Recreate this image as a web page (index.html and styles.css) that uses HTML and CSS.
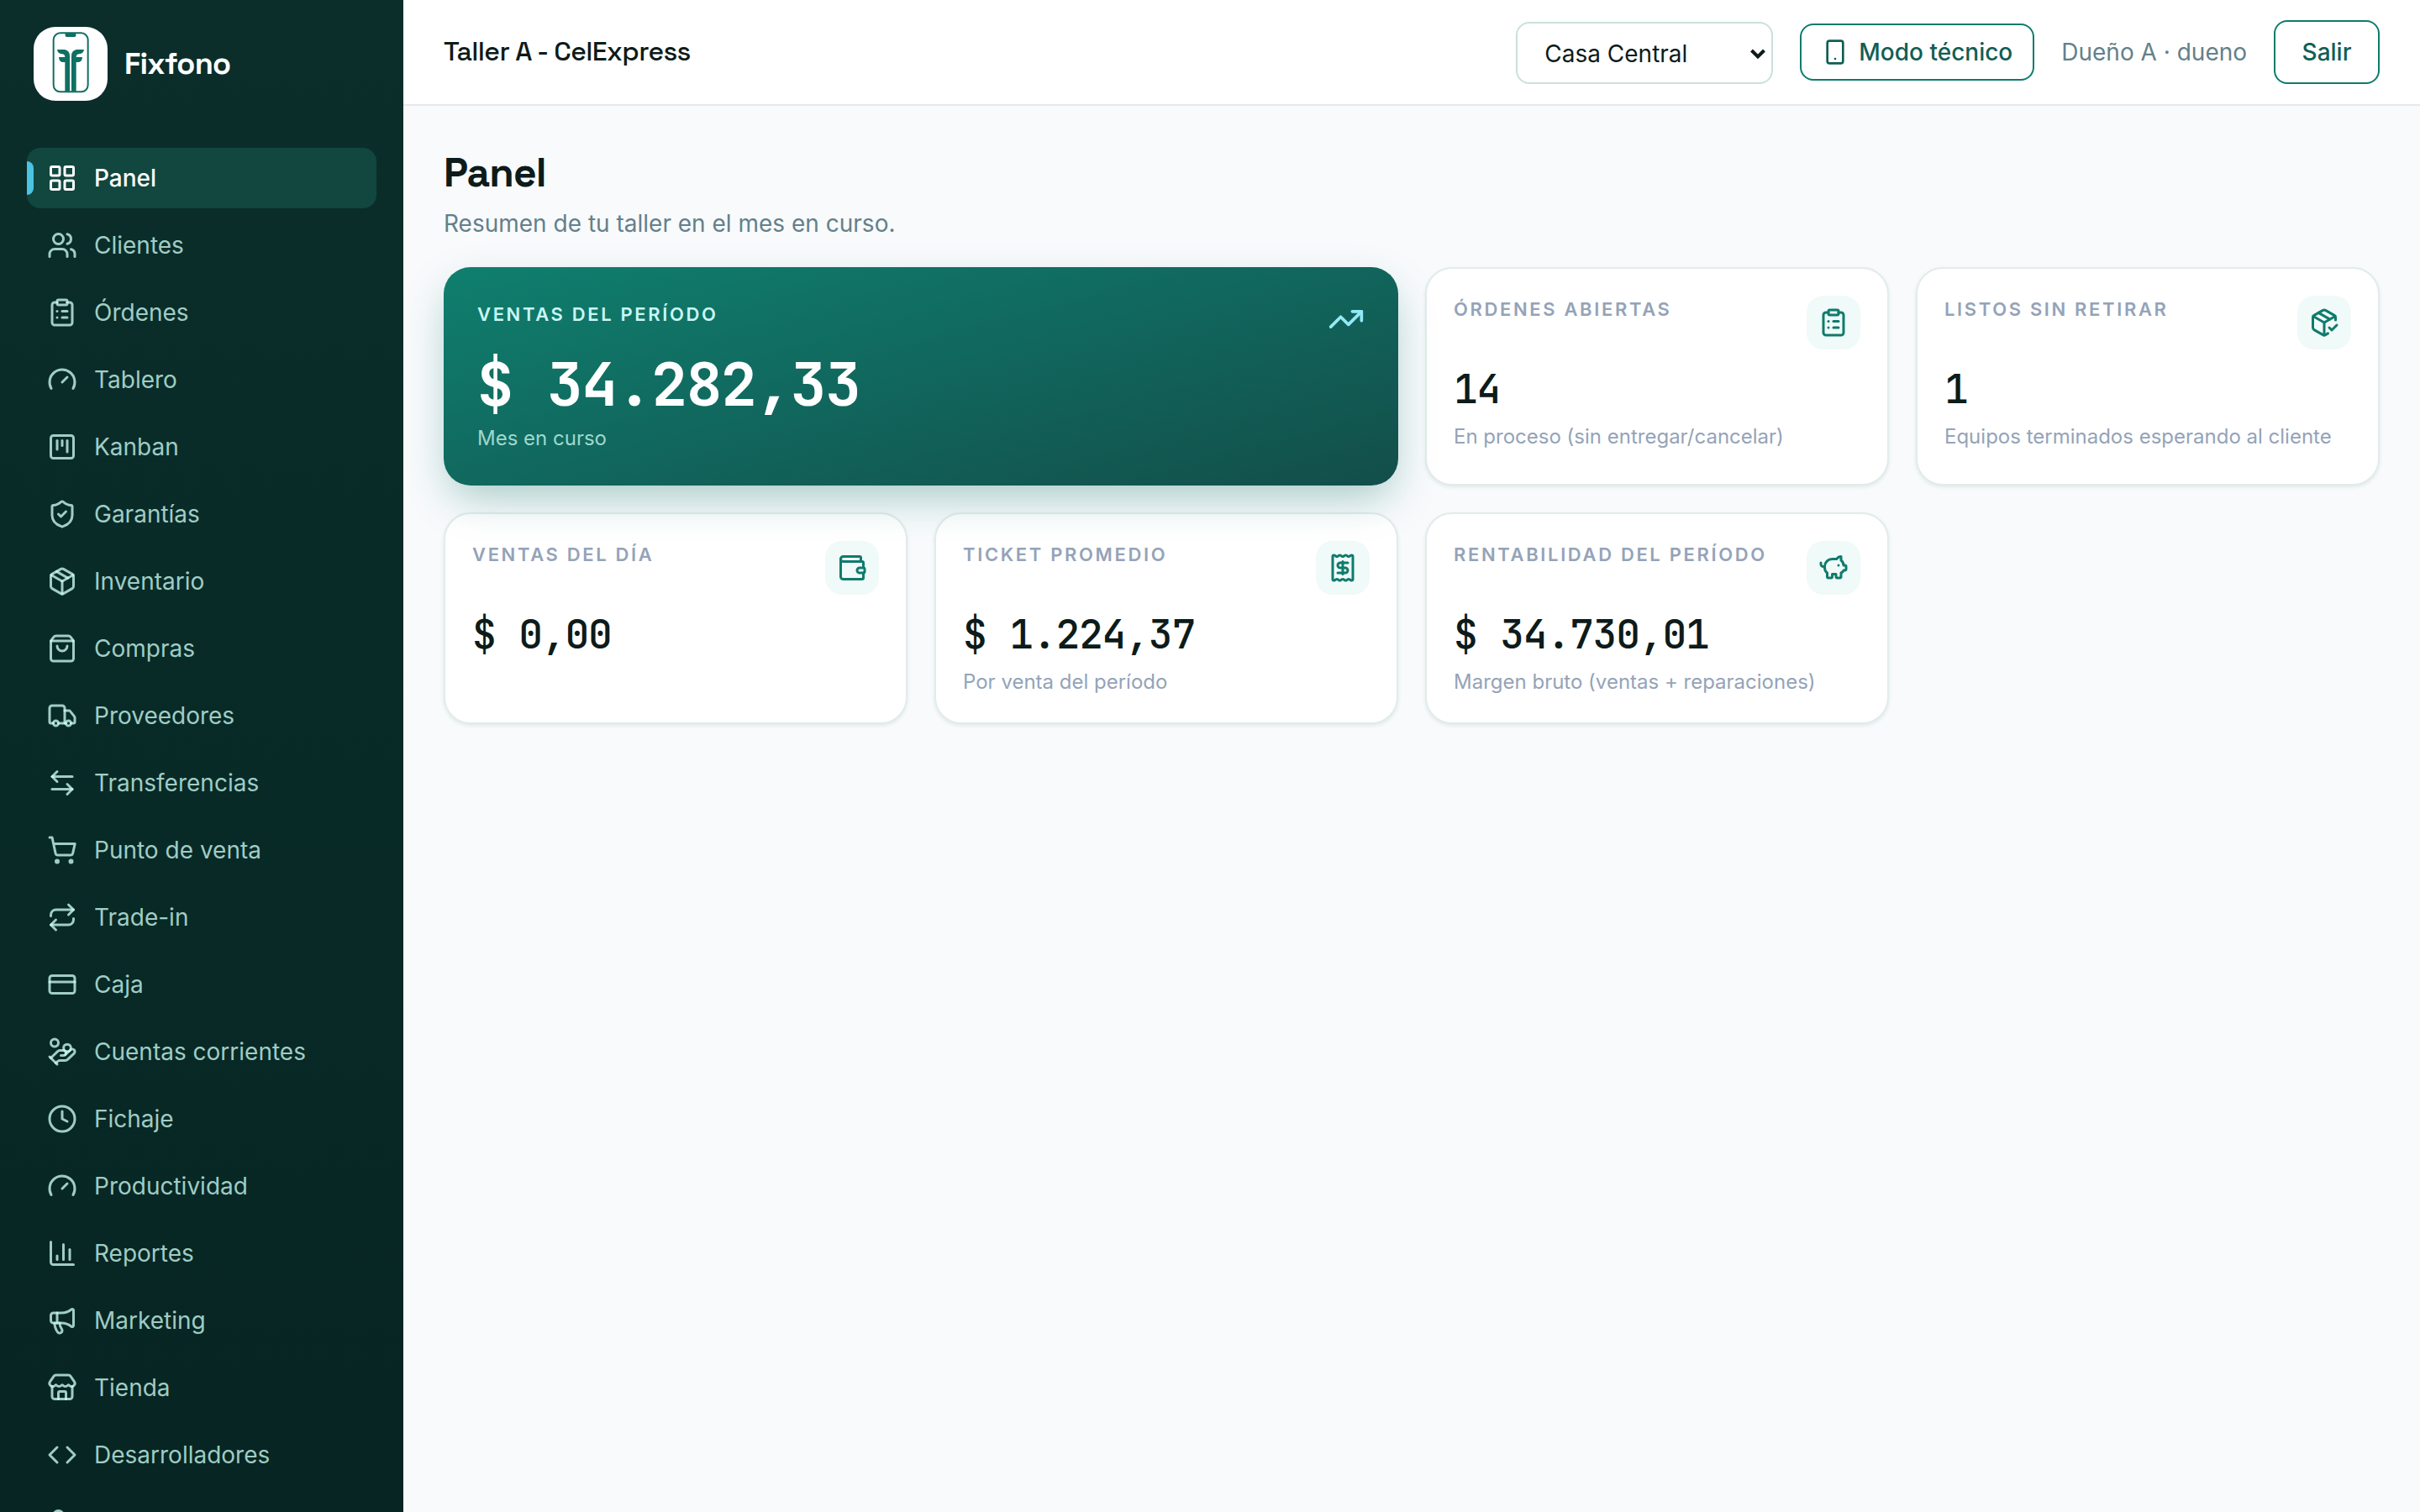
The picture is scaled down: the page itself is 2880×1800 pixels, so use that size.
FILE: index.html
```html
<!DOCTYPE html>
<html lang="es">
<head>
<meta charset="utf-8">
<title>Fixfono</title>
<link rel="stylesheet" href="styles.css">
</head>
<body>
<div class="app">
  <aside class="sidebar">
    <div class="brand">
      <svg class="brand-logo" viewBox="120 96 264 264">
        <rect x="191" y="118" width="123" height="210" rx="24" fill="none" stroke="#0f6f62" stroke-width="6"/>
        <path d="M233 118h38v9q0 5-5 5h-28q-5 0-5-5z"/>
        <path d="M204 177H231Q249 181 249 200V326H232V222H222Q211 220 210 204H232Q232 194 221 193Q206 192 204 177Z"/>
        <path d="M300 177H273Q255 181 255 200V326H272V222H282Q293 220 294 204H272Q272 194 283 193Q298 192 300 177Z"/>
      </svg>
      <span class="brand-name">Fixfono</span>
    </div>
    <nav class="nav">
      <a class="nav-item active"><svg class="icon" viewBox="0 0 24 24"><rect x="3" y="3" width="7" height="7" rx="1"/><rect x="14" y="3" width="7" height="7" rx="1"/><rect x="14" y="14" width="7" height="7" rx="1"/><rect x="3" y="14" width="7" height="7" rx="1"/></svg>Panel</a>
      <a class="nav-item"><svg class="icon" viewBox="0 0 24 24"><path d="M16 21v-2a4 4 0 0 0-4-4H6a4 4 0 0 0-4 4v2"/><path d="M16 3.128a4 4 0 0 1 0 7.744"/><path d="M22 21v-2a4 4 0 0 0-3-3.87"/><circle cx="9" cy="7" r="4"/></svg>Clientes</a>
      <a class="nav-item"><svg class="icon" viewBox="0 0 24 24"><rect x="8" y="2" width="8" height="4" rx="1"/><path d="M16 4h2a2 2 0 0 1 2 2v14a2 2 0 0 1-2 2H6a2 2 0 0 1-2-2V6a2 2 0 0 1 2-2h2"/><path d="M12 11h4"/><path d="M12 16h4"/><path d="M8 11h.01"/><path d="M8 16h.01"/></svg>Órdenes</a>
      <a class="nav-item"><svg class="icon" viewBox="0 0 24 24"><path d="m12 14 4-4"/><path d="M3.34 19a10 10 0 1 1 17.32 0"/></svg>Tablero</a>
      <a class="nav-item"><svg class="icon" viewBox="0 0 24 24"><rect x="3" y="3" width="18" height="18" rx="2"/><path d="M8 7v7"/><path d="M12 7v4"/><path d="M16 7v9"/></svg>Kanban</a>
      <a class="nav-item"><svg class="icon" viewBox="0 0 24 24"><path d="M20 13c0 5-3.5 7.5-7.66 8.95a1 1 0 0 1-.67-.01C7.5 20.5 4 18 4 13V6a1 1 0 0 1 1-1c2 0 4.5-1.2 6.24-2.72a1.17 1.17 0 0 1 1.52 0C14.51 3.81 17 5 19 5a1 1 0 0 1 1 1z"/><path d="m9 12 2 2 4-4"/></svg>Garantías</a>
      <a class="nav-item"><svg class="icon" viewBox="0 0 24 24"><path d="M11 21.73a2 2 0 0 0 2 0l7-4A2 2 0 0 0 21 16V8a2 2 0 0 0-1-1.73l-7-4a2 2 0 0 0-2 0l-7 4A2 2 0 0 0 3 8v8a2 2 0 0 0 1 1.73z"/><path d="M12 22V12"/><path d="M3.29 7 12 12l8.71-5"/><path d="m7.5 4.27 9 5.15"/></svg>Inventario</a>
      <a class="nav-item"><svg class="icon" viewBox="0 0 24 24"><path d="M16 10a4 4 0 0 1-8 0"/><path d="M3.103 6.034h17.794"/><path d="M3.4 5.467a2 2 0 0 0-.4 1.2V20a2 2 0 0 0 2 2h14a2 2 0 0 0 2-2V6.667a2 2 0 0 0-.4-1.2l-2-2.667A2 2 0 0 0 17 2H7a2 2 0 0 0-1.6.8z"/></svg>Compras</a>
      <a class="nav-item"><svg class="icon" viewBox="0 0 24 24"><path d="M14 18V6a2 2 0 0 0-2-2H4a2 2 0 0 0-2 2v11a1 1 0 0 0 1 1h2"/><path d="M15 18H9"/><path d="M19 18h2a1 1 0 0 0 1-1v-3.65a1 1 0 0 0-.22-.624l-3.48-4.35A1 1 0 0 0 17.52 8H14"/><circle cx="17" cy="18" r="2"/><circle cx="7" cy="18" r="2"/></svg>Proveedores</a>
      <a class="nav-item"><svg class="icon" viewBox="0 0 24 24"><path d="M8 3 4 7l4 4"/><path d="M4 7h16"/><path d="m16 21 4-4-4-4"/><path d="M20 17H4"/></svg>Transferencias</a>
      <a class="nav-item"><svg class="icon" viewBox="0 0 24 24"><circle cx="8" cy="21" r="1"/><circle cx="19" cy="21" r="1"/><path d="M2.05 2.05h2l2.66 12.42a2 2 0 0 0 2 1.58h9.78a2 2 0 0 0 1.95-1.57l1.65-7.43H5.12"/></svg>Punto de venta</a>
      <a class="nav-item"><svg class="icon" viewBox="0 0 24 24"><path d="m17 2 4 4-4 4"/><path d="M3 11v-1a4 4 0 0 1 4-4h14"/><path d="m7 22-4-4 4-4"/><path d="M21 13v1a4 4 0 0 1-4 4H3"/></svg>Trade-in</a>
      <a class="nav-item"><svg class="icon" viewBox="0 0 24 24"><rect x="2" y="5" width="20" height="14" rx="2"/><path d="M2 10h20"/></svg>Caja</a>
      <a class="nav-item"><svg class="icon" viewBox="0 0 24 24"><path d="M11 15h2a2 2 0 1 0 0-4h-3c-.6 0-1.1.2-1.4.6L3 17"/><path d="m7 21 1.6-1.4c.3-.4.8-.6 1.4-.6h4c1.1 0 2.1-.4 2.8-1.2l4.6-4.4a2 2 0 0 0-2.75-2.91l-4.2 3.9"/><path d="m2 16 6 6"/><circle cx="16" cy="9" r="2.9"/><circle cx="6" cy="5" r="3"/></svg>Cuentas corrientes</a>
      <a class="nav-item"><svg class="icon" viewBox="0 0 24 24"><circle cx="12" cy="12" r="10"/><path d="M12 6v6l4 2"/></svg>Fichaje</a>
      <a class="nav-item"><svg class="icon" viewBox="0 0 24 24"><path d="m12 14 4-4"/><path d="M3.34 19a10 10 0 1 1 17.32 0"/></svg>Productividad</a>
      <a class="nav-item"><svg class="icon" viewBox="0 0 24 24"><path d="M3 3v16a2 2 0 0 0 2 2h16"/><path d="M18 17V9"/><path d="M13 17V5"/><path d="M8 17v-3"/></svg>Reportes</a>
      <a class="nav-item"><svg class="icon" viewBox="0 0 24 24"><path d="M11 6a13 13 0 0 0 8.4-2.8A1 1 0 0 1 21 4v12a1 1 0 0 1-1.6.8A13 13 0 0 0 11 14H5a2 2 0 0 1-2-2V8a2 2 0 0 1 2-2z"/><path d="M6 14a12 12 0 0 0 2.4 7.2 2 2 0 0 0 3.2-2.4A8 8 0 0 1 10 14"/><path d="M8 6v8"/></svg>Marketing</a>
      <a class="nav-item"><svg class="icon" viewBox="0 0 24 24"><path d="M15 21v-5a1 1 0 0 0-1-1h-4a1 1 0 0 0-1 1v5"/><path d="M17.774 10.31a1.12 1.12 0 0 0-1.549 0 2.5 2.5 0 0 1-3.451 0 1.12 1.12 0 0 0-1.548 0 2.5 2.5 0 0 1-3.452 0 1.12 1.12 0 0 0-1.549 0 2.5 2.5 0 0 1-3.77-3.248l2.889-4.184A2 2 0 0 1 7 2h10a2 2 0 0 1 1.653.873l2.895 4.192a2.5 2.5 0 0 1-3.774 3.244"/><path d="M4 10.95V19a2 2 0 0 0 2 2h12a2 2 0 0 0 2-2v-8.05"/></svg>Tienda</a>
      <a class="nav-item"><svg class="icon" viewBox="0 0 24 24"><path d="m16 18 6-6-6-6"/><path d="m8 6-6 6 6 6"/></svg>Desarrolladores</a>
      <a class="nav-item"><svg class="icon" viewBox="0 0 24 24"><circle cx="9" cy="7" r="4"/><path d="M10 15H6a4 4 0 0 0-4 4v2"/></svg></a>
    </nav>
  </aside>
  <div class="content">
    <header class="topbar">
      <div class="tenant">Taller A - CelExpress</div>
      <div class="actions">
        <div class="select">Casa Central<svg class="chevron" viewBox="0 0 20 16"><path d="M2.5 4 10 11.5 17.5 4"/></svg></div>
        <button class="btn btn-tech"><svg class="icon" viewBox="0 0 24 24"><rect x="5" y="2" width="14" height="20" rx="2"/><path d="M12 18h.01"/></svg>Modo técnico</button>
        <span class="user">Dueño A · dueno</span>
        <button class="btn btn-exit">Salir</button>
      </div>
    </header>
    <main class="main">
      <h1 class="title">Panel</h1>
      <p class="subtitle">Resumen de tu taller en el mes en curso.</p>
      <section class="cards">
        <article class="hero">
          <div class="card-head"><span class="label">VENTAS DEL PERÍODO</span><svg class="icon hero-icon" viewBox="0 0 24 24"><path d="M16 7h6v6"/><path d="m22 7-8.5 8.5-5-5L2 17"/></svg></div>
          <div class="hero-value">$ 34.282,33</div>
          <div class="note">Mes en curso</div>
        </article>
        <article class="card">
          <div class="card-head"><span class="label">ÓRDENES ABIERTAS</span><span class="badge"><svg class="icon" viewBox="0 0 24 24"><rect x="8" y="2" width="8" height="4" rx="1"/><path d="M16 4h2a2 2 0 0 1 2 2v14a2 2 0 0 1-2 2H6a2 2 0 0 1-2-2V6a2 2 0 0 1 2-2h2"/><path d="M12 11h4"/><path d="M12 16h4"/><path d="M8 11h.01"/><path d="M8 16h.01"/></svg></span></div>
          <div class="value">14</div>
          <div class="note">En proceso (sin entregar/cancelar)</div>
        </article>
        <article class="card">
          <div class="card-head"><span class="label">LISTOS SIN RETIRAR</span><span class="badge"><svg class="icon" viewBox="0 0 24 24"><path d="m16 16 2 2 4-4"/><path d="M21 10V8a2 2 0 0 0-1-1.73l-7-4a2 2 0 0 0-2 0l-7 4A2 2 0 0 0 3 8v8a2 2 0 0 0 1 1.73l7 4a2 2 0 0 0 2 0l2-1.14"/><path d="m7.5 4.27 9 5.15"/><path d="M3.29 7 12 12l8.71-5"/><path d="M12 22V12"/></svg></span></div>
          <div class="value">1</div>
          <div class="note">Equipos terminados esperando al cliente</div>
        </article>
        <article class="card">
          <div class="card-head"><span class="label">VENTAS DEL DÍA</span><span class="badge"><svg class="icon" viewBox="0 0 24 24"><path d="M19 7V4a1 1 0 0 0-1-1H5a2 2 0 0 0 0 4h15a1 1 0 0 1 1 1v4h-3a2 2 0 0 0 0 4h3a1 1 0 0 0 1-1v-2a1 1 0 0 0-1-1"/><path d="M3 5v14a2 2 0 0 0 2 2h15a1 1 0 0 0 1-1v-4"/></svg></span></div>
          <div class="value">$ 0,00</div>
        </article>
        <article class="card">
          <div class="card-head"><span class="label">TICKET PROMEDIO</span><span class="badge"><svg class="icon" viewBox="0 0 24 24"><path d="M12 17V7"/><path d="M16 8h-6a2 2 0 0 0 0 4h4a2 2 0 0 1 0 4H8"/><path d="M4 3a1 1 0 0 1 1-1 1.3 1.3 0 0 1 .7.2l.933.6a1.3 1.3 0 0 0 1.4 0l.934-.6a1.3 1.3 0 0 1 1.4 0l.933.6a1.3 1.3 0 0 0 1.4 0l.933-.6a1.3 1.3 0 0 1 1.4 0l.934.6a1.3 1.3 0 0 0 1.4 0l.933-.6A1.3 1.3 0 0 1 19 2a1 1 0 0 1 1 1v18a1 1 0 0 1-1 1 1.3 1.3 0 0 1-.7-.2l-.933-.6a1.3 1.3 0 0 0-1.4 0l-.934.6a1.3 1.3 0 0 1-1.4 0l-.933-.6a1.3 1.3 0 0 0-1.4 0l-.933.6a1.3 1.3 0 0 1-1.4 0l-.934-.6a1.3 1.3 0 0 0-1.4 0l-.933.6a1.3 1.3 0 0 1-.7.2 1 1 0 0 1-1-1z"/></svg></span></div>
          <div class="value">$ 1.224,37</div>
          <div class="note">Por venta del período</div>
        </article>
        <article class="card">
          <div class="card-head"><span class="label">RENTABILIDAD DEL PERÍODO</span><span class="badge"><svg class="icon" viewBox="0 0 24 24"><path d="M11 17h3v2a1 1 0 0 0 1 1h2a1 1 0 0 0 1-1v-3a3.16 3.16 0 0 0 2-2h1a1 1 0 0 0 1-1v-2a1 1 0 0 0-1-1h-1a5 5 0 0 0-2-4V3a4 4 0 0 0-3.2 1.6l-.3.4H11a6 6 0 0 0-6 6v1a5 5 0 0 0 2 4v3a1 1 0 0 0 1 1h2a1 1 0 0 0 1-1z"/><path d="M16 10h.01"/><path d="M2 8v1a2 2 0 0 0 2 2h1"/></svg></span></div>
          <div class="value">$ 34.730,01</div>
          <div class="note">Margen bruto (ventas + reparaciones)</div>
        </article>
      </section>
    </main>
  </div>
</div>
</body>
</html>
```
FILE: styles.css
```css
* { box-sizing: border-box; }
body {
  margin: 0;
  font-family: Inter, "Liberation Sans", sans-serif;
  font-size: 28px;
  line-height: 42px;
  color: #0d1b1a;
  background: #f8fafc;
}
h1, p { margin: 0; }
.app { display: flex; height: 1800px; overflow: hidden; }
.icon {
  width: 36px;
  height: 36px;
  flex: none;
  fill: none;
  stroke: currentColor;
  stroke-width: 2;
  stroke-linecap: round;
  stroke-linejoin: round;
}

/* Sidebar */
.sidebar {
  width: 480px;
  flex: none;
  padding: 32px 32px 0;
  overflow: hidden;
  background: linear-gradient(180deg, #0b2e2b 0%, #082a27 55%, #072522 100%);
}
.brand { display: flex; align-items: center; gap: 20px; padding-left: 8px; margin-bottom: 56px; }
.brand-logo { width: 88px; height: 88px; border-radius: 26px; background: #fff; fill: #0f6f62; }
.brand-name {
  font-family: "Space Grotesk", Inter, sans-serif;
  font-size: 36px;
  font-weight: 600;
  letter-spacing: -0.02em;
  color: #fff;
}
.nav { display: flex; flex-direction: column; gap: 8px; }
.nav-item {
  display: flex;
  align-items: center;
  gap: 20px;
  height: 72px;
  flex: none;
  padding: 0 24px;
  border-radius: 16px;
  color: rgba(204, 251, 241, 0.78);
}
.nav-item.active { position: relative; background: #11473f; color: #fff; font-weight: 500; }
.nav-item.active::before {
  content: "";
  position: absolute;
  left: 0;
  top: 16px;
  width: 8px;
  height: 40px;
  border-radius: 0 8px 8px 0;
  background: #4cc3e0;
}

/* Top bar */
.content { flex: 1; min-width: 0; }
.topbar {
  display: flex;
  align-items: center;
  justify-content: space-between;
  height: 126px;
  padding: 0 48px;
  background: #fff;
  border-bottom: 2px solid #e2ecea;
}
.tenant {
  padding-bottom: 2px;
  font-family: "Space Grotesk", Inter, sans-serif;
  font-size: 32px;
  font-weight: 500;
  letter-spacing: -0.02em;
}
.actions { display: flex; align-items: center; gap: 32px; }
.select {
  display: flex;
  align-items: center;
  justify-content: space-between;
  width: 306px;
  height: 74px;
  margin-top: 2px;
  padding: 2px 6px 0 32px;
  border: 2px solid #cbe0dd;
  border-radius: 16px;
  background: #fff;
}
.chevron { width: 20px; height: 16px; fill: none; stroke: #0d1b1a; stroke-width: 4; }
.btn {
  display: flex;
  align-items: center;
  gap: 12px;
  font: inherit;
  font-weight: 500;
  color: #115e55;
  background: #fff;
  border: 2px solid #0f7b6c;
  border-radius: 16px;
}
.btn-tech { height: 68px; padding: 0 24px; }
.btn-tech .icon { width: 32px; height: 32px; }
.btn-exit { height: 76px; padding: 0 31.5px; }
.user { color: #64808a; }

/* Page */
.main { padding: 50px 48px 48px; }
.title {
  font-family: "Space Grotesk", Inter, sans-serif;
  font-size: 48px;
  line-height: 60px;
  font-weight: 600;
  letter-spacing: -0.02em;
}
.subtitle { margin-top: 9px; color: #64808a; }
.cards {
  display: grid;
  grid-template-columns: repeat(4, 1fr);
  grid-template-rows: 260px 252px;
  gap: 32px;
  margin-top: 31px;
}
.card {
  padding: 32px;
  background: #fff;
  border: 2px solid #e2ecea;
  border-radius: 32px;
  box-shadow: 0 2px 4px rgba(15, 78, 72, 0.1);
}
.card-head { display: flex; justify-content: space-between; align-items: flex-start; }
.label {
  font-size: 22px;
  line-height: 33px;
  font-weight: 600;
  letter-spacing: 0.12em;
  color: #94a3b8;
}
.badge {
  display: flex;
  align-items: center;
  justify-content: center;
  width: 64px;
  height: 64px;
  border-radius: 20px;
  background: #f0faf8;
  color: #0f7b6c;
}
.value, .hero-value {
  font-family: "JetBrains Mono", "Roboto Mono", "DejaVu Sans Mono", monospace;
  font-weight: 600;
  letter-spacing: -0.025em;
  white-space: pre;
}
.value { margin-top: 19px; font-size: 48px; line-height: 56px; font-weight: 500; }
.note { margin-top: 11px; font-size: 24px; line-height: 36px; color: #94a3b8; }
.hero {
  position: relative;
  grid-column: span 2;
  padding: 40px;
  border-radius: 32px;
  color: #fff;
  background: linear-gradient(165deg, #0f7f6e 0%, #11645b 55%, #134e4a 100%);
  box-shadow: 0 20px 50px -8px rgba(15, 110, 100, 0.36);
}
.hero .label { color: #c9f7f5; }
.hero .card-head { height: 64px; }
.hero-icon { width: 44px; height: 44px; color: #93e9f5; stroke-width: 2; }
.hero-value { font-size: 72px; line-height: 72px; }
.hero .note { margin-top: 10px; color: #9fd8cd; }
```
